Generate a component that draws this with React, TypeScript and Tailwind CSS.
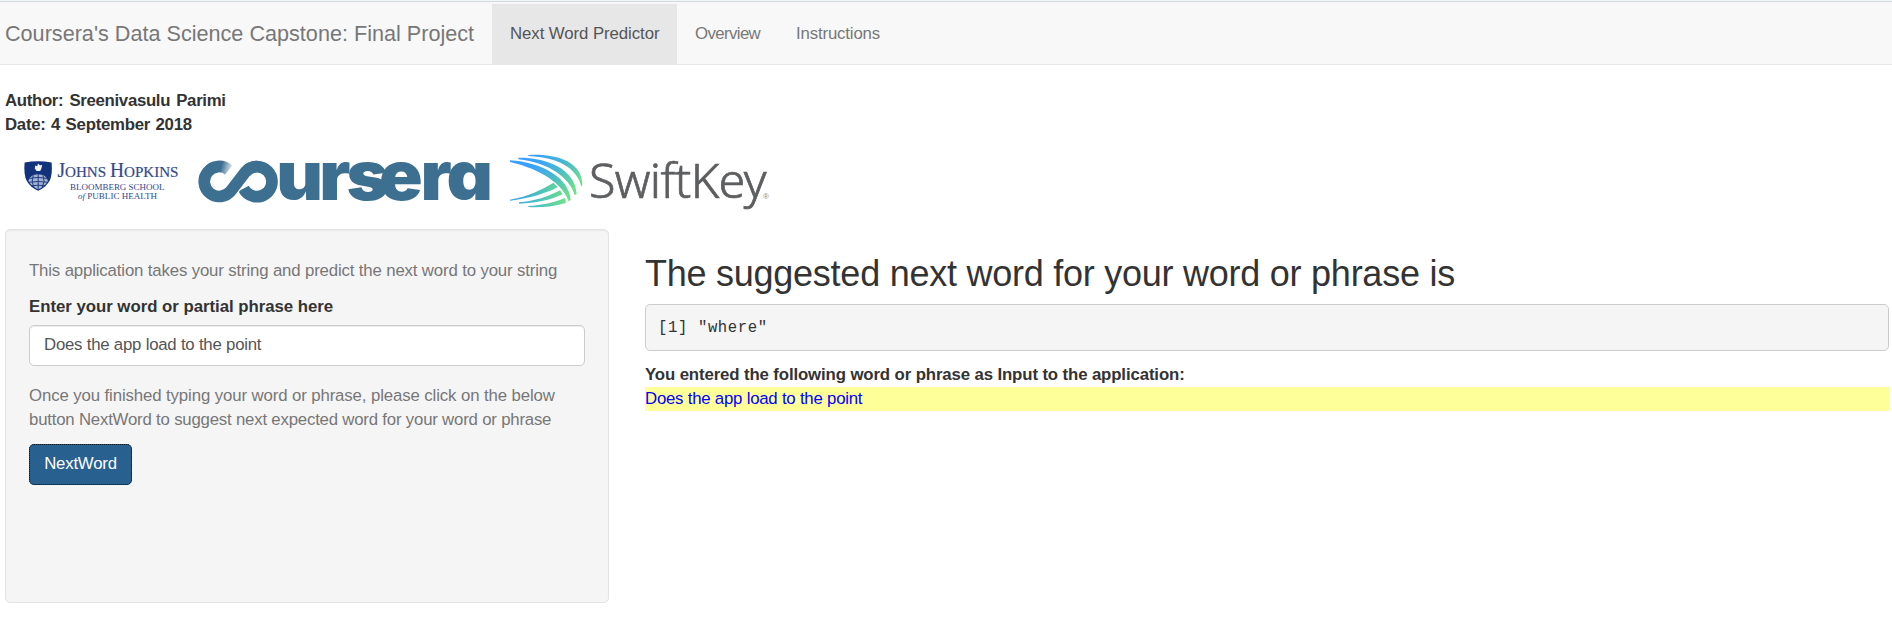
const navItems = [
  { label: "Next Word Predictor", active: true, className: "w-[185px] tracking-[-0.07px]" },
  { label: "Overview", active: false, className: "w-[101px] tracking-[-0.6px]" },
  { label: "Instructions", active: false, className: "w-[121px] tracking-[-0.15px]" },
];

function JohnsHopkinsLogo() {
  return (
    <svg className="h-[60px] w-[170px] overflow-visible" viewBox="20 152 170 60" aria-label="Johns Hopkins">
      <path d="M24.6 162.6Q38 159.8 51.6 162.6Q52.8 175 49.5 181Q45.5 187.5 38.2 190.8Q30.5 187.5 26.8 181Q23.5 175 24.6 162.6Z" fill="#12327c" />
      <path d="M28.3 181Q30 174.4 38.2 174.2Q46.4 174.4 48 181Q45 186.3 38.2 189.4Q31.4 186.3 28.3 181Z" fill="#a3b0d0" />
      <path d="M38.2 174V190M33.4 175.5Q30.8 181 34.2 187.6M43 175.5Q45.6 181 42.2 187.6M29.5 178.4Q38.2 176.4 47 178.4M28.5 182.3Q38.2 180.7 48 182.3M31 185.8Q38.2 184.6 45.6 185.8" stroke="#12327c" strokeWidth="0.9" fill="none" />
      <path d="M27 174.8Q38.2 170.5 49.4 174.8" stroke="#12327c" strokeWidth="1.4" fill="none" />
      <path d="M38 163.4L39.8 165.2L42.2 165L41.4 168.4L40.2 171H36.6L34.8 168.4L35.2 165.6L37.2 166.2Z" fill="#f2f4fa" />
      <g fill="#35498c" className="font-['Liberation_Serif',serif]">
        <text y="177" textLength="121" lengthAdjust="spacingAndGlyphs" x="57.5" fontSize="15.5" stroke="#35498c" strokeWidth="0.2">
          <tspan fontSize="20">J</tspan>OHNS <tspan fontSize="20">H</tspan>OPKINS
        </text>
        <text x="70" y="190" fontSize="9.2" textLength="94.5" lengthAdjust="spacingAndGlyphs">BLOOMBERG SCHOOL</text>
        <text x="78" y="199" fontSize="9.2" textLength="79" lengthAdjust="spacingAndGlyphs">
          <tspan fontStyle="italic">of</tspan> PUBLIC HEALTH
        </text>
      </g>
    </svg>
  );
}

function CourseraLogo() {
  return (
    <svg className="h-[60px] w-[310px] overflow-visible" viewBox="190 152 310 60" aria-label="Coursera">
      <defs>
        <linearGradient id="fade" gradientUnits="userSpaceOnUse" x1="221" y1="167" x2="232" y2="170">
          <stop offset="0" stopColor="#fff" stopOpacity="0" />
          <stop offset="1" stopColor="#fff" stopOpacity="0.9" />
        </linearGradient>
      </defs>
      <path d="M245.2 172.3A15 15 0 1 1 243.6 188.5" stroke="#3d6f91" strokeWidth="11.7" fill="none" />
      <path d="M229 193.5L241 177.8" stroke="#fff" strokeWidth="14" />
      <path d="M228.8 169.9A15 15 0 1 0 231.1 190.7L245.2 172.3A15 15 0 0 1 257 166.5" stroke="#3d6f91" strokeWidth="11.7" fill="none" />
      <path d="M221 159H236L231 176L221 173Z" fill="url(#fade)" />
      <text
        transform="scale(1.06 1)"
        x="260.6 301.2 327 357.6 396.8 421.3"
        y="200.3"
        fontSize="68"
        fontWeight="900"
        fill="#3d6f91"
        className="font-[Inter,sans-serif] [font-feature-settings:'cv11']"
      >
        ursera
      </text>
    </svg>
  );
}

function SwiftKeyLogo() {
  return (
    <svg className="h-[60px] w-[280px] overflow-visible" viewBox="500 152 280 60" aria-label="SwiftKey">
      <defs>
        <linearGradient id="swift" gradientUnits="userSpaceOnUse" x1="90" y1="30" x2="200" y2="130">
          <stop offset="0" stopColor="#3a9fff" />
          <stop offset="0.5" stopColor="#48b8cf" />
          <stop offset="1" stopColor="#6be08a" />
        </linearGradient>
        <linearGradient id="swiftLow" gradientUnits="userSpaceOnUse" x1="15" y1="150" x2="180" y2="160">
          <stop offset="0" stopColor="#3fa0f0" />
          <stop offset="0.5" stopColor="#4bbfc0" />
          <stop offset="1" stopColor="#6be08a" />
        </linearGradient>
      </defs>
      <g transform="translate(505 148) scale(0.33333)">
        <path fill="url(#swift)" d="M70 21C150 16 232 39 232 110L229 117C221 75 179 28 70 24ZM40 29C120 28 210 59 215 138L209 141C194 90 130 43 40 34ZM15 37C110 43 193 89 197 156L191 160C174 109 110 64 15 42Z" />
        <path fill="url(#swiftLow)" d="M15 155C70 145 110 125 146 104L158 118C120 138 70 152 15 158ZM42 163C90 160 130 145 165 127L173 139C135 157 90 165 42 167ZM70 174C110 172 150 163 180 150L183 164C150 175 110 179 70 177Z" />
      </g>
      <text x="589" y="197.6" fontSize="48.5" fontWeight="300" fill="#5d5e60" stroke="#5d5e60" strokeWidth="0.7" textLength="177.5" lengthAdjust="spacing" className="font-['Noto_Sans',sans-serif]">
        SwiftKey
      </text>
      <text x="763" y="198.5" fontSize="8" fill="#888" className="font-['Liberation_Sans',sans-serif]">®</text>
    </svg>
  );
}

export default function App() {
  return (
    <div className="min-h-[632px] bg-white font-['Liberation_Sans',Arial,sans-serif] text-[16.8px] leading-[24px] text-[#333]">
      <nav className="flex h-[65px] border-b border-[#e7e7e7] bg-[#f8f8f8] pt-1 shadow-[inset_0_1px_0_#f3f6f6,inset_0_2px_0_#d0d9da]">
        <div className="w-[492px] pt-[18px] pl-[5px] text-[21.6px] tracking-[0.01px] whitespace-nowrap text-[#777]">
          Coursera's Data Science Capstone: Final Project
        </div>
        {navItems.map((item) => (
          <a
            key={item.label}
            className={`${item.className} h-[60px] pt-[18px] pl-[18px] whitespace-nowrap ${item.active ? "bg-[#e7e7e7] text-[#555]" : "text-[#777]"}`}
          >
            {item.label}
          </a>
        ))}
      </nav>

      <header className="mt-6 pl-[5px] font-bold">
        <div className="tracking-[-0.32px] [word-spacing:1.8px]">Author: Sreenivasulu Parimi</div>
        <div className="tracking-[-0.25px] [word-spacing:1px]">Date: 4 September 2018</div>
      </header>

      <div className="mt-[15px] flex h-[77px] pl-5">
        <JohnsHopkinsLogo />
        <CourseraLogo />
        <SwiftKeyLogo />
      </div>

      <main className="flex items-start gap-[36px] pl-[5px]">
        <form className="h-[374px] w-[604px] shrink-0 rounded-[5px] border border-[#e3e3e3] bg-[#f5f5f5] px-[23px] pt-[29px] shadow-[inset_0_1px_1px_rgba(0,0,0,0.05)]">
          <p className="tracking-[-0.147px] whitespace-nowrap text-[#777]">
            This application takes your string and predict the next word to your string
          </p>
          <label className="mt-3 block font-bold tracking-[-0.02px]">Enter your word or partial phrase here</label>
          <div className="mt-[6px] h-[41px] w-[556px] rounded-[5px] border border-[#ccc] bg-white pt-[7px] pl-[14px] tracking-[-0.22px] text-[#555] shadow-[inset_0_1px_1px_rgba(0,0,0,0.075)]">
            Does the app load to the point
          </div>
          <p className="mt-[18px] whitespace-nowrap text-[#777]">
            <span className="block tracking-[-0.11px]">Once you finished typing your word or phrase, please click on the below</span>
            <span className="block tracking-[-0.2px]">button NextWord to suggest next expected word for your word or phrase</span>
          </p>
          <button
            type="button"
            className="mt-[12px] block h-[41px] w-[103px] rounded-[5px] border border-[#204d74] bg-[#286090] pb-px tracking-[-0.22px] text-white outline-1 outline-offset-[-1px] outline-dotted outline-[#0b1a28]"
          >
            NextWord
          </button>
        </form>

        <section className="min-w-0 flex-1">
          <h2 className="mt-[25px] text-[36px] leading-[40px] tracking-[-0.25px] whitespace-nowrap">
            The suggested next word for your word or phrase is
          </h2>
          <pre className="mt-[10px] mr-[3px] h-[47px] rounded-[5px] border border-[#ccc] bg-[#f5f5f5] pt-[11px] pl-[12px] font-['Liberation_Mono',monospace] text-[15.6px] tracking-[0.62px]">
            [1] "where"
          </pre>
          <div className="mt-3 font-bold tracking-[-0.12px]">You entered the following word or phrase as Input to the application:</div>
          <div className="mr-[2px] bg-[#ffff99] tracking-[-0.22px] text-[#0000ff]">Does the app load to the point</div>
        </section>
      </main>
    </div>
  );
}
